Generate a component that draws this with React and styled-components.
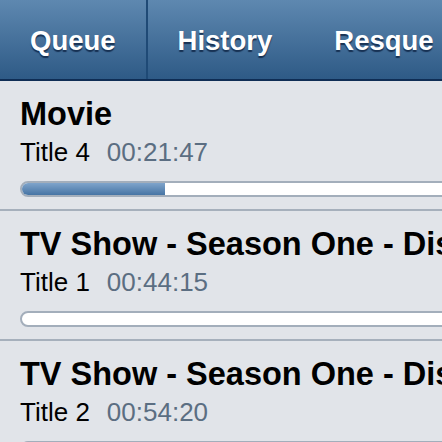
import React from 'react';
import styled, { createGlobalStyle } from 'styled-components';

const GlobalStyle = createGlobalStyle`
  html, body {
    margin: 0;
    padding: 0;
    background: #e1e4e9;
    font-family: "Liberation Sans", Arial, sans-serif;
    overflow: hidden;
  }
`;

const Page = styled.div`
  width: 442px;
  height: 442px;
  overflow: hidden;
  background: #e1e4e9;
`;

const TabBar = styled.div`
  display: flex;
  height: 79px;
  background: linear-gradient(#5e88b0, #2e5a86);
  border-bottom: 2px solid #0f2d55;
  white-space: nowrap;
`;

const Tab = styled.div`
  display: flex;
  align-items: center;
  flex-shrink: 0;
  padding: 3px 30px 0;
  font-size: 27.5px;
  font-weight: bold;
  color: #fff;
  text-shadow: 0 2px 1px rgba(10, 30, 60, 0.75);
  border-right: 2px solid ${p => (p.$divided ? '#1f4a76' : 'transparent')};
`;

const List = styled.div`
  display: flex;
  flex-direction: column;
`;

const Item = styled.div`
  height: 128px;
  padding: 0 0 0 20px;
  border-bottom: 2px solid #a6b0bc;
  box-sizing: content-box;
  white-space: nowrap;
  overflow: hidden;
`;

const Title = styled.div`
  margin-top: 15px;
  font-size: 32.5px;
  line-height: 36px;
  font-weight: bold;
  color: #000;
`;

const Meta = styled.div`
  margin-top: 5px;
  font-size: 26px;
  line-height: 30px;
  color: #000;
`;

const Time = styled.span`
  margin-left: 17px;
  color: #5b6e82;
`;

const Track = styled.div`
  margin-top: 14px;
  width: 460px;
  height: 12px;
  border: 2px solid #a3aebb;
  border-radius: 9px;
  background: #fff;
  overflow: hidden;
`;

const Fill = styled.div`
  height: 100%;
  background: linear-gradient(#7fa4cb, #4674a4);
`;

const items = [
  { title: 'Movie', sub: 'Title 4', time: '00:21:47', progress: 143 },
  { title: 'TV Show - Season One - Disc 1', sub: 'Title 1', time: '00:44:15', progress: 0 },
  { title: 'TV Show - Season One - Disc 1', sub: 'Title 2', time: '00:54:20', progress: 0 },
];

export default function App() {
  return (
    <Page>
      <GlobalStyle />
      <TabBar>
        <Tab $divided>Queue</Tab>
        <Tab>History</Tab>
        <Tab>Resque</Tab>
      </TabBar>
      <List>
        {items.map((it, i) => (
          <Item key={i}>
            <Title>{it.title}</Title>
            <Meta>
              {it.sub}
              <Time>{it.time}</Time>
            </Meta>
            <Track>
              <Fill style={{ width: it.progress }} />
            </Track>
          </Item>
        ))}
      </List>
    </Page>
  );
}
